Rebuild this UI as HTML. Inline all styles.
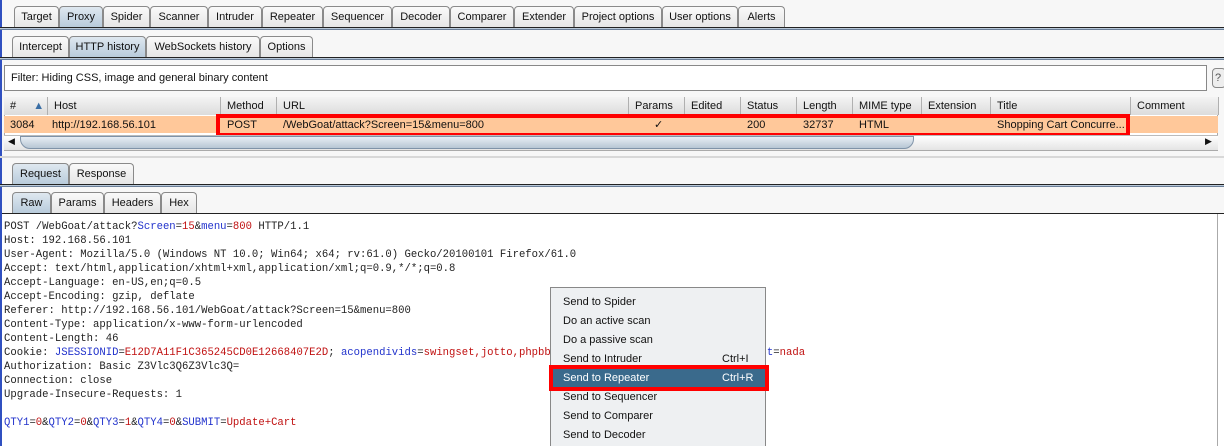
<!DOCTYPE html>
<html><head><style>
*{margin:0;padding:0;box-sizing:border-box}
html,body{width:1224px;height:446px;overflow:hidden}
body{background:#f7f7f7;font-family:"Liberation Sans",sans-serif;font-size:11px;color:#111;position:relative}
.a{position:absolute}
.tab{position:absolute;height:21px;border:1px solid #8a8a8a;border-bottom:none;border-radius:4px 4px 0 0;background:linear-gradient(#fafafa,#e6e6e6);text-align:center;line-height:21px;font-size:11px}
.tab.sel{background:linear-gradient(#dfe8f0,#b8cbdb)}
.line{position:absolute;left:0;width:1224px;height:3px;border-top:1px solid #222;border-bottom:1px solid #6b7f99;background:#b8c8d8}
.hd{position:absolute;top:97px;height:18px;border-right:1px solid #b0b0b0;line-height:18px;padding-left:6px;background:linear-gradient(#f4f4f4,#dcdcdc)}
.c{position:absolute;top:116px;height:17px;line-height:18px;padding-left:6px}
.code{position:absolute;left:4px;top:219px;font-family:"Liberation Mono",monospace;font-size:10.6px;line-height:14px;white-space:pre;color:#222}
.b{color:#2233cc}.r{color:#c01010}
.mi{position:absolute;left:563px;font-size:11px}
</style></head><body>
<div class="a" style="left:0;top:0;width:2px;height:446px;background:#3050c0"></div>
<div class="tab" style="left:14px;top:6px;width:45px">Target</div>
<div class="tab sel" style="left:59px;top:6px;width:44px">Proxy</div>
<div class="tab" style="left:103px;top:6px;width:47px">Spider</div>
<div class="tab" style="left:150px;top:6px;width:58px">Scanner</div>
<div class="tab" style="left:208px;top:6px;width:54px">Intruder</div>
<div class="tab" style="left:262px;top:6px;width:61px">Repeater</div>
<div class="tab" style="left:323px;top:6px;width:69px">Sequencer</div>
<div class="tab" style="left:392px;top:6px;width:58px">Decoder</div>
<div class="tab" style="left:450px;top:6px;width:64px">Comparer</div>
<div class="tab" style="left:514px;top:6px;width:60px">Extender</div>
<div class="tab" style="left:574px;top:6px;width:88px">Project options</div>
<div class="tab" style="left:662px;top:6px;width:76px">User options</div>
<div class="tab" style="left:738px;top:6px;width:47px">Alerts</div>
<div class="line" style="top:27px"></div>
<div class="tab" style="left:12px;top:36px;width:57px">Intercept</div>
<div class="tab sel" style="left:69px;top:36px;width:77px">HTTP history</div>
<div class="tab" style="left:146px;top:36px;width:114px">WebSockets history</div>
<div class="tab" style="left:260px;top:36px;width:53px">Options</div>
<div class="line" style="top:57px"></div>
<div class="a" style="left:4px;top:65px;width:1203px;height:26px;border:1px solid #888;background:#fff;line-height:25px;padding-left:6px">Filter: Hiding CSS, image and general binary content</div>
<div class="a" style="left:1212px;top:68px;width:14px;height:20px;border:1px solid #888;border-radius:4px;background:#eee;line-height:18px;padding-left:2px;color:#555">?</div>
<div class="a" style="left:4px;top:97px;width:1214px;height:54px;background:#fff;border:1px solid #aaa"></div>
<div class="hd" style="left:4px;width:44px"># <span style="color:#3a6ea5;margin-left:14px">▲</span></div>
<div class="hd" style="left:48px;width:173px">Host</div>
<div class="hd" style="left:221px;width:56px">Method</div>
<div class="hd" style="left:277px;width:352px">URL</div>
<div class="hd" style="left:629px;width:56px">Params</div>
<div class="hd" style="left:685px;width:56px">Edited</div>
<div class="hd" style="left:741px;width:56px">Status</div>
<div class="hd" style="left:797px;width:56px">Length</div>
<div class="hd" style="left:853px;width:69px">MIME type</div>
<div class="hd" style="left:922px;width:69px">Extension</div>
<div class="hd" style="left:991px;width:140px">Title</div>
<div class="hd" style="left:1131px;width:88px">Comment</div>
<div class="a" style="left:4px;top:116px;width:1214px;height:17px;background:#ffc89a"></div>
<div class="c" style="left:4px">3084</div>
<div class="c" style="left:46px">http://192.168.56.101</div>
<div class="c" style="left:221px">POST</div>
<div class="c" style="left:277px">/WebGoat/attack?Screen=15&amp;menu=800</div>
<div class="c" style="left:648px">✓</div>
<div class="c" style="left:741px">200</div>
<div class="c" style="left:797px">32737</div>
<div class="c" style="left:853px">HTML</div>
<div class="c" style="left:991px">Shopping Cart Concurre...</div>
<div class="a" style="left:216px;top:114px;width:914px;height:23px;border:4px solid #f00"></div>
<div class="a" style="left:4px;top:135px;width:1214px;height:15px;background:linear-gradient(#fff,#e4e4e4);border-top:1px solid #bbb"></div>
<div class="a" style="left:20px;top:136px;width:894px;height:13px;border-radius:0 0 10px 10px;background:linear-gradient(#e8eef4,#b7c6d4);border:1px solid #7f93a8"></div>
<div class="a" style="left:8px;top:136px;font-size:9px">◀</div>
<div class="a" style="left:1205px;top:136px;font-size:9px">▶</div>
<div class="a" style="left:0;top:156px;width:1224px;height:2px;background:#d8d8d8"></div>
<div class="tab sel" style="left:12px;top:163px;width:57px">Request</div>
<div class="tab" style="left:69px;top:163px;width:65px">Response</div>
<div class="line" style="top:184px"></div>
<div class="tab sel" style="left:12px;top:192px;width:39px">Raw</div>
<div class="tab" style="left:51px;top:192px;width:53px">Params</div>
<div class="tab" style="left:104px;top:192px;width:57px">Headers</div>
<div class="tab" style="left:161px;top:192px;width:36px">Hex</div>
<div class="a" style="left:2px;top:213px;width:1222px;height:233px;background:#fff;border-top:1px solid #222"></div>
<div class="a" style="left:1217px;top:214px;width:1px;height:232px;background:#aaa"></div>
<div class="code" style="top:220px">POST /WebGoat/attack?<span class="b">Screen</span>=<span class="r">15</span>&amp;<span class="b">menu</span>=<span class="r">800</span> HTTP/1.1
Host: 192.168.56.101
User-Agent: Mozilla/5.0 (Windows NT 10.0; Win64; x64; rv:61.0) Gecko/20100101 Firefox/61.0
Accept: text/html,application/xhtml+xml,application/xml;q=0.9,*/*;q=0.8
Accept-Language: en-US,en;q=0.5
Accept-Encoding: gzip, deflate
Referer: http://192.168.56.101/WebGoat/attack?Screen=15&amp;menu=800
Content-Type: application/x-www-form-urlencoded
Content-Length: 46
Cookie: <span class="b">JSESSIONID</span>=<span class="r">E12D7A11F1C365245CD0E12668407E2D</span>; <span class="b">acopendivids</span>=<span class="r">swingset,jotto,phpbb2,redmine,dvwa</span>; <span class="b">acgroupswithpersist</span>=<span class="r">nada</span>
Authorization: Basic Z3Vlc3Q6Z3Vlc3Q=
Connection: close
Upgrade-Insecure-Requests: 1

<span class="b">QTY1</span>=<span class="r">0</span>&amp;<span class="b">QTY2</span>=<span class="r">0</span>&amp;<span class="b">QTY3</span>=<span class="r">1</span>&amp;<span class="b">QTY4</span>=<span class="r">0</span>&amp;<span class="b">SUBMIT</span>=<span class="r">Update+Cart</span></div>
<div class="a" style="left:550px;top:287px;width:216px;height:165px;background:#eef0f2;border:1px solid #888"></div>
<div class="a" style="left:551px;top:369px;width:214px;height:18px;background:#3a6a8c"></div>
<div class="mi" style="top:296px">Send to Spider</div>
<div class="mi" style="top:315px">Do an active scan</div>
<div class="mi" style="top:334px">Do a passive scan</div>
<div class="mi" style="top:353px">Send to Intruder</div>
<div class="mi" style="top:353px;left:722px">Ctrl+I</div>
<div class="mi" style="top:372px;color:#fff">Send to Repeater</div>
<div class="mi" style="top:372px;left:722px;color:#fff">Ctrl+R</div>
<div class="mi" style="top:391px">Send to Sequencer</div>
<div class="mi" style="top:410px">Send to Comparer</div>
<div class="mi" style="top:429px">Send to Decoder</div>
<div class="a" style="left:549px;top:365px;width:220px;height:26px;border:4px solid #f00"></div>
</body></html>
